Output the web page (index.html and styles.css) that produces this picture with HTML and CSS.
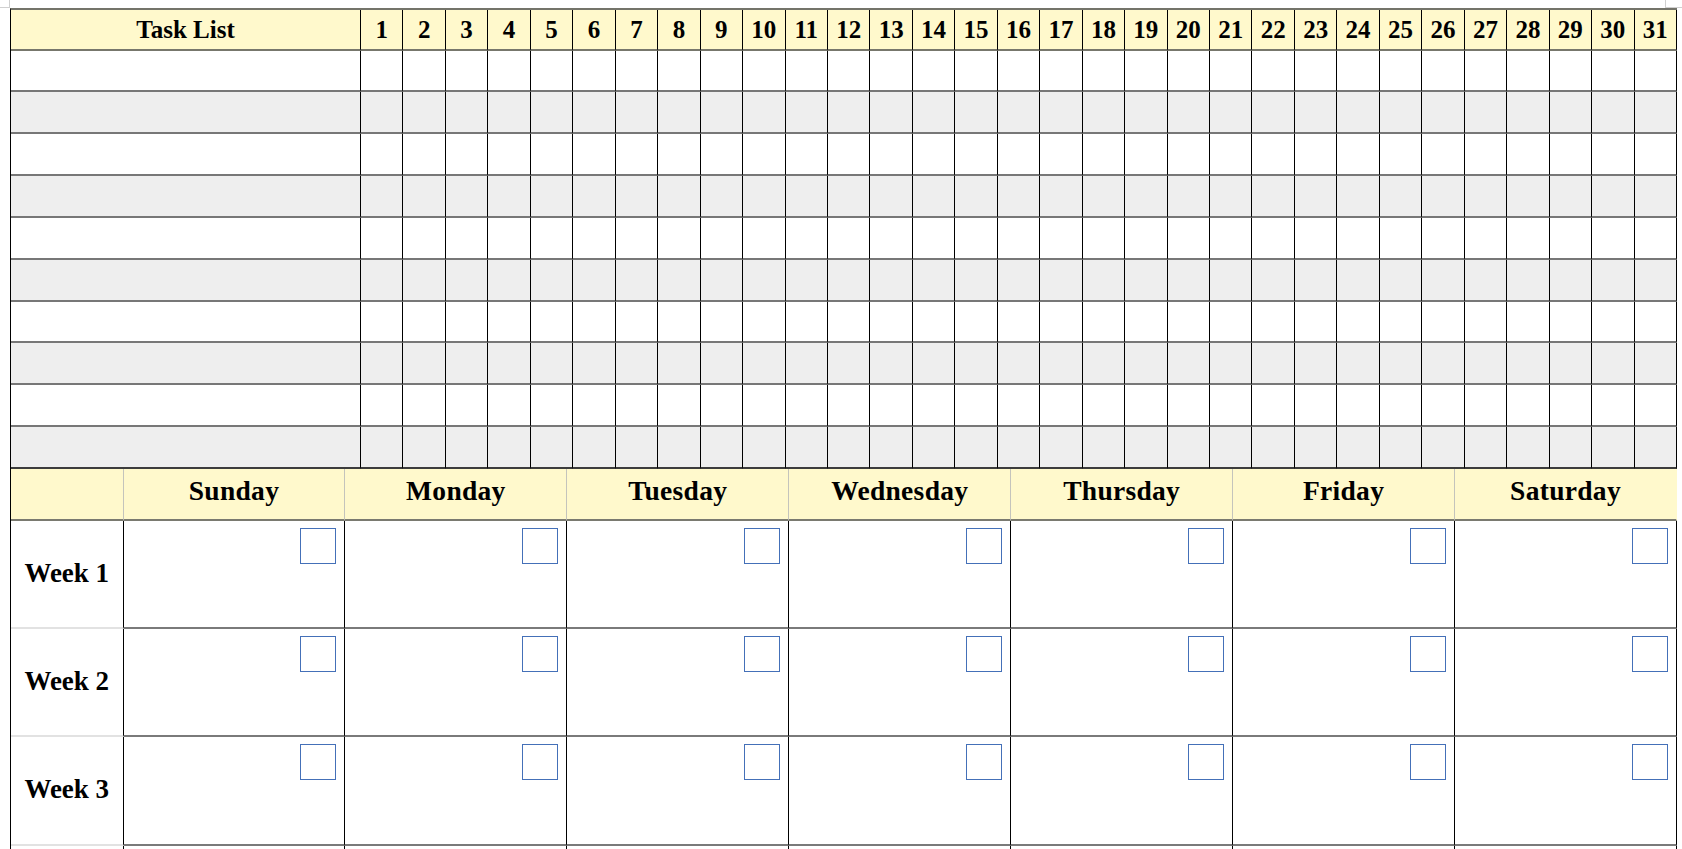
FILE: index.html
```html
<!DOCTYPE html>
<html lang="en">
<head>
<meta charset="utf-8">
<title>Monthly Task Tracker</title>
<link rel="stylesheet" href="styles.css">
</head>
<body>
<div class="corner corner-tl"></div>
<div class="corner corner-tr"></div>
<main class="sheet">
  <section class="tasks" id="tasks">
    <div class="cell head task-head">Task List</div>
  </section>
  <section class="calendar" id="calendar">
    <div class="chead blank"></div>
    <div class="chead">Sunday</div>
    <div class="chead">Monday</div>
    <div class="chead">Tuesday</div>
    <div class="chead">Wednesday</div>
    <div class="chead">Thursday</div>
    <div class="chead">Friday</div>
    <div class="chead last">Saturday</div>
  </section>
</main>
<script>
(function () {
  var t = document.getElementById('tasks');
  var html = '';
  for (var d = 1; d <= 31; d++) html += '<div class="cell head num">' + d + '</div>';
  for (var r = 0; r < 10; r++) {
    var cls = r % 2 ? ' alt' : '';
    html += '<div class="cell task' + cls + '"></div>';
    for (var c = 1; c <= 31; c++) html += '<div class="cell' + cls + '"></div>';
  }
  t.insertAdjacentHTML('beforeend', html);
  var cal = document.getElementById('calendar');
  var ch = '';
  for (var w = 1; w <= 4; w++) {
    ch += '<div class="week">' + (w <= 3 ? 'Week ' + w : '') + '</div>';
    for (var k = 0; k < 7; k++) ch += '<div class="day"><span class="box"></span></div>';
  }
  cal.insertAdjacentHTML('beforeend', ch);
})();
</script>
</body>
</html>
```

FILE: styles.css
```css
html, body {
  margin: 0;
  padding: 0;
  background: #ffffff;
}
body {
  font-family: "Liberation Serif", "Times New Roman", serif;
  font-weight: bold;
  color: #000;
  overflow: hidden;
  height: 849px;
}
.corner {
  position: absolute;
  top: 0;
  width: 10px;
  height: 7px;
  border-color: #d0d0d0;
  border-style: solid;
  border-width: 0;
}
.corner-tl {
  left: 0;
  border-right-width: 1px;
  border-bottom-width: 1px;
  width: 9px;
}
.corner-tr {
  left: 1665px;
  width: 17px;
  border-left-width: 1px;
  border-bottom-width: 1px;
}
.sheet {
  margin: 8px 0 0 10px;
  width: 1667px;
}
.tasks {
  display: grid;
  grid-template-columns: 350px repeat(31, 1fr);
  grid-template-rows: 40.6px repeat(10, 41.84px);
  border-left: 1px solid #000;
  border-top: 2px solid #74746a;
  box-sizing: border-box;
}
.cell {
  box-sizing: border-box;
  border-right: 1px solid #000;
  border-bottom: 2px solid #777777;
  background: #ffffff;
}
.cell.alt {
  background: #eeeeee;
}
.head {
  background: #fff9cc;
  border-bottom-color: #77776c;
  display: flex;
  align-items: center;
  justify-content: center;
  font-size: 25px;
  line-height: 1;
  padding-top: 1px;
}
.tasks > .cell:nth-last-child(-n+32) {
  border-bottom-color: #3c3c3c;
}
.calendar {
  display: grid;
  grid-template-columns: 112.5px repeat(7, 1fr);
  grid-template-rows: 52px repeat(4, 108.3px);
  border-left: 1px solid #000;
  box-sizing: border-box;
}
.chead {
  box-sizing: border-box;
  background: #fff9cc;
  border-right: 1px solid #c4c4bc;
  border-bottom: 2px solid #7a7a70;
  display: flex;
  align-items: center;
  justify-content: center;
  font-size: 27.5px;
  letter-spacing: 0.3px;
  line-height: 1;
  padding-bottom: 7px;
}
.chead.last {
  border-right: 1px solid #fff9cc;
}
.week {
  box-sizing: border-box;
  border-right: 1px solid #000;
  border-bottom: 2px solid #e2e2e2;
  display: flex;
  align-items: center;
  justify-content: center;
  font-size: 27px;
  line-height: 1;
  padding-bottom: 2px;
}
.day {
  box-sizing: border-box;
  border-right: 1px solid #000;
  border-bottom: 2px solid #7a7a7a;
  display: flex;
  justify-content: flex-end;
  align-items: flex-start;
  padding: 7px 8px 0 0;
}
.box {
  display: block;
  width: 36px;
  height: 36px;
  box-sizing: border-box;
  border: 1.5px solid #4470b8;
  background: #ffffff;
}
```
